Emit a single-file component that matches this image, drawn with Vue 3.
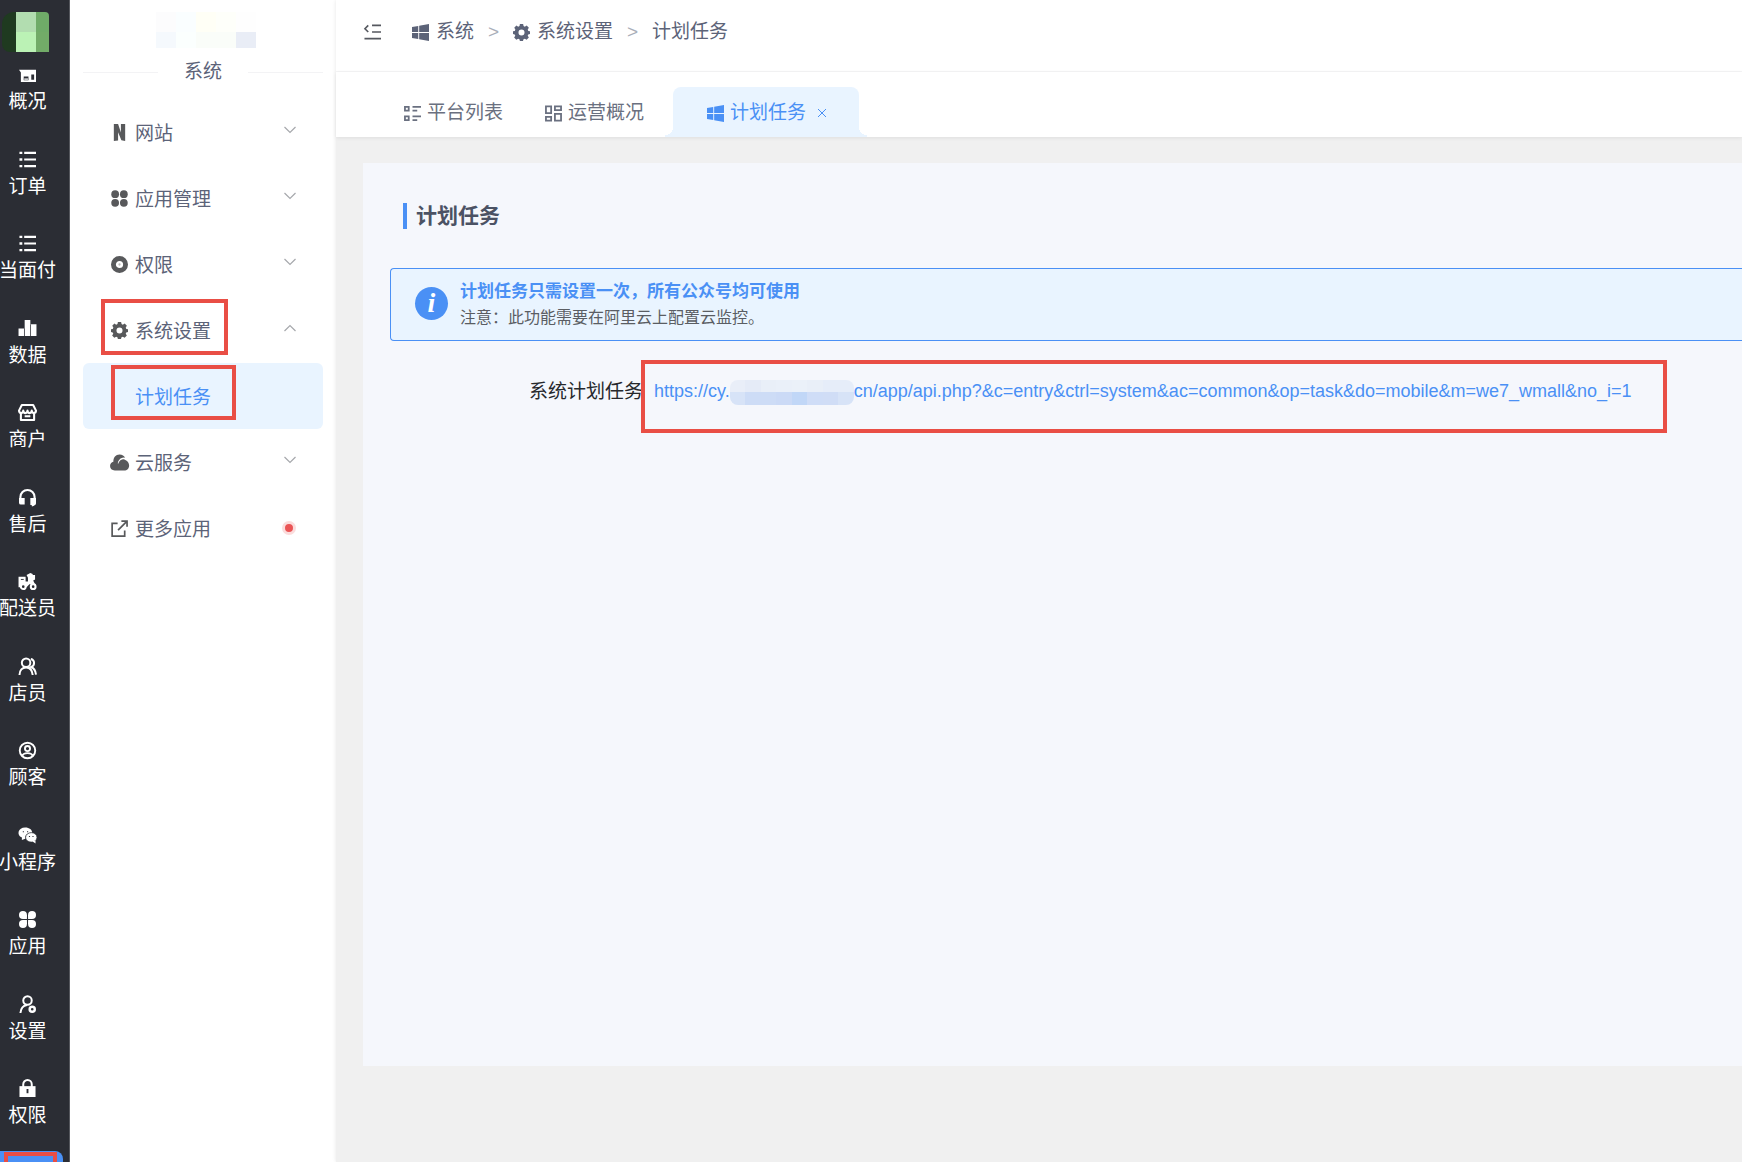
<script setup>
import { ref } from 'vue'

const railItems = [
  { label: '概况', icon: 'overview' },
  { label: '订单', icon: 'list' },
  { label: '当面付', icon: 'list' },
  { label: '数据', icon: 'bars' },
  { label: '商户', icon: 'shop' },
  { label: '售后', icon: 'headset' },
  { label: '配送员', icon: 'scooter' },
  { label: '店员', icon: 'users' },
  { label: '顾客', icon: 'customer' },
  { label: '小程序', icon: 'wechat' },
  { label: '应用', icon: 'apps' },
  { label: '设置', icon: 'userset' },
  { label: '权限', icon: 'lock' }
]

// Inner markup of each glyph, drawn on an 18 x 18 grid.
const icons = {
  overview: '<path d="M0 4h18v13H2V7z" fill="currentColor"/><path d="M5 11h5v4H5zM13 9h3v5.500h-3z" fill="#2b2d34"/><path d="M5.500 13h4v2.500h-4z" fill="#c9cacc"/>',
  list: '<path d="M5.500 2H18M5.500 9H18M5.500 16H18" stroke="currentColor" stroke-width="2.200"/><path d="M.500 2h3M.500 9h3M.500 16h3" stroke="currentColor" stroke-width="2.600"/>',
  bars: '<path d="M-.500 9h6v8h-6zM6 0h6v17H6zM12.500 4.500h6V17h-6z" fill="currentColor"/><path d="M5.800 9v8M12.200 5v12" stroke="#2b2d34" stroke-width=".6"/>',
  shop: '<path d="M3 1h12l3 6c0 3.500-4.500 3.500-4.500 0 0 3.500-4.500 3.500-4.500 0 0 3.500-4.500 3.500-4.500 0C4.500 10.500 0 10.500 0 7zM2 9.500V17h14V9.500M6 13h6" fill="none" stroke="currentColor" stroke-width="2.200" stroke-linejoin="round"/>',
  headset: '<path d="M1.500 12V8.500a7.500 7.500 0 0 1 15 0V14q0 3-3 3.500" fill="none" stroke="currentColor" stroke-width="2.200"/><path d="M0 9.500h6v7H2q-2 0-2-2zM12 9.500h6V15q0 2-2 2h-4z" fill="currentColor"/>',
  scooter: '<path d="M-.500 4H7v5h2.500V5L8 2l4-2 2.500 1v1H17v5l-2 1 2 4h-6l-3 3H-.500z" fill="currentColor"/><circle cx="4.500" cy="14.500" r="2.500" fill="#2b2d34" stroke="currentColor" stroke-width="2.200"/><circle cx="15" cy="14.500" r="2.500" fill="#2b2d34" stroke="currentColor" stroke-width="2.200"/><path d="M2 6.800h3" stroke="#2b2d34"/>',
  users: '<circle cx="7.500" cy="5" r="4.500" fill="none" stroke="currentColor" stroke-width="2.100"/><path d="M.500 18c0-5 3-8 7-8s6.500 3 7 8M12.500 1c4.500 1 4.500 7 .500 8.500 3 1.200 4.500 4 5 8" fill="none" stroke="currentColor" stroke-width="2.100"/>',
  customer: '<circle cx="9" cy="9" r="8.200" fill="none" stroke="currentColor" stroke-width="2"/><circle cx="9" cy="7" r="2.700" fill="none" stroke="currentColor" stroke-width="2"/><path d="M3.500 14.800c1-4 10-4 11 0" fill="none" stroke="currentColor" stroke-width="2"/>',
  wechat: '<path d="M6.500.500c4.500 0 7.500 2.500 7.500 5.700-4-.5-8 2-7.200 6.300l-3.800 1.300.1-2.600C-3 8.500-1 .5 6.500.500z" fill="currentColor"/><ellipse cx="13" cy="11" rx="6" ry="5" fill="currentColor" stroke="#2b2d34" stroke-width=".7"/><path d="m14 15 3.500 2.500V14z" fill="currentColor"/><path d="M4 5h1.200M8.500 5h1.200M10.500 10h1.200M14.200 10h1.200" stroke="#2b2d34" stroke-width="1.200"/>',
  apps: '<circle cx="4.200" cy="4.200" r="4.200" fill="currentColor"/><circle cx="13.800" cy="4.200" r="4.200" fill="currentColor"/><circle cx="4.200" cy="13.800" r="4.200" fill="currentColor"/><circle cx="13.800" cy="13.800" r="4.200" fill="currentColor"/><path d="M4.200 4.200h4.200v4.200H4.200zM9.600 4.200h4.200v4.200H9.600zM4.200 9.600h4.200v4.200H4.200zM9.600 9.600h4.200v4.200H9.600z" fill="currentColor"/>',
  userset: '<circle cx="9" cy="4.700" r="4.500" fill="none" stroke="currentColor" stroke-width="2.100"/><path d="M1.500 18c.5-5 3-8 7-8.500" fill="none" stroke="currentColor" stroke-width="2.100"/><circle cx="14" cy="14" r="2.700" fill="none" stroke="currentColor" stroke-width="2.600"/>',
  lock: '<path d="M.500 6.500h17V18H.500z" fill="currentColor"/><path d="M4.500 8V4.500a4.500 4.500 0 0 1 9 0V8" fill="none" stroke="currentColor" stroke-width="2.100"/><path d="M9 9.500v4.500" stroke="#2b2d34" stroke-width="2"/>',
  site: '<path d="M3 0h4.500l3 9V0H15v18l-4-.8L7.500 8.700V17.500l-4.500.5z" fill="currentColor"/>',
  dots: '<circle cx="4.400" cy="4.400" r="4.100" fill="currentColor"/><circle cx="13.600" cy="4.400" r="4.100" fill="currentColor"/><circle cx="4.400" cy="13.600" r="4.100" fill="currentColor"/><circle cx="13.600" cy="13.600" r="4.100" fill="currentColor"/>',
  ring: '<circle cx="9" cy="9" r="6.400" fill="none" stroke="currentColor" stroke-width="5.200"/><circle cx="9" cy="9" r="1.200" fill="currentColor" opacity=".4"/>',
  gear: '<path fill-rule="evenodd" d="M7.300 0h3.400l.5 2.200 1.300.6 2-1.200 2.300 2.300-1.200 2 .6 1.400 1.800.4v2.900l-1.900.5-.5 1.300 1.200 2-2.400 2.300-1.900-1.200-1.400.6-.5 1.900H7.300l-.5-1.900-1.300-.6-2 1.200-2.300-2.300 1.200-2-.6-1.300L0 10.600V7.700l1.900-.4.600-1.400-1.200-2 2.300-2.300 1.900 1.200 1.400-.6zM9 5.800a3.200 3.200 0 1 0 0 6.400 3.200 3.200 0 0 0 0-6.400z" fill="currentColor"/>',
  cloud: '<path d="M4 17.500c-3 0-5-2-5-4.700C-1 10.500.500 8.800 2.500 8.300 2.500 3.500 5 .500 9 .500c3 0 5 1.500 6 3.700-4.500-.7-7 1.800-7.300 5.300 1.800-3.300 4.300-4.500 7-3.500 2.800 1 4.500 3.200 4.500 6.200 0 3.300-2.200 5.300-5.200 5.300z" fill="currentColor"/><path d="M7.700 10C8 6.500 11 4 15 4.500" fill="none" stroke="#fff" stroke-width=".9"/>',
  external: '<path d="M7 3.500H1.200V17H14.500v-6M11 1.200h6v6M17 1.200 7.500 10.700" fill="none" stroke="currentColor" stroke-width="1.800"/>',
  windows: '<path d="M0 3.200 6.600 2v6.500H0zM7.600 1.900 18 0v8.500H7.600zM0 9.500h6.600V16L0 14.800zM7.600 9.500H18V18L7.600 16.200z" fill="currentColor"/>',
  table: '<path d="M1 2h4v4H1zM1 12h4v4H1z" fill="none" stroke="currentColor" stroke-width="1.900"/><path d="M9 2h9M9 6h5M9 12h9M9 16h5" stroke="currentColor" stroke-width="1.800"/>',
  panels: '<path d="M1 1.500h5.500v7H1zM10.500 1.500H17v4h-6.500zM1 12.500h5.500v4H1zM10.500 9.500H17v7h-6.500z" fill="none" stroke="currentColor" stroke-width="1.900"/>',
  collapse: '<path d="M8.500 1.500H18M8.500 8.500H18M.500 15.500H18" stroke="currentColor" stroke-width="1.700"/><path d="M4.500 1.500 1 5l3.500 3.500" fill="none" stroke="currentColor" stroke-width="1.700"/>'
}

const menu = ref([
  { label: '网站', icon: 'site' },
  { label: '应用管理', icon: 'dots' },
  { label: '权限', icon: 'ring' },
  { label: '系统设置', icon: 'gear', open: true, marked: true, children: ['计划任务'] },
  { label: '云服务', icon: 'cloud' },
  { label: '更多应用', icon: 'external', dot: true }
])

const logoTiles = ['#1f3a20', '#b2ddb0', '#6fab68', '#1f3a20', '#bbf2b5', '#72ab68']
const nameTiles = ['#fcfcfd', '#fafeff', '#fffff6', '#fefffa', '#fefefe', '#f5f9fd', '#fbfffe', '#fafdf9', '#fafdf9', '#e9edf6']
const hostTiles = [
  '#e9eef8', '#e5ebf7', '#e9eff8', '#eaf0f9', '#ebf1f9', '#e9eff8', '#e6edf9', '#e6edf9',
  '#d7e3f7', '#cddcf6', '#cddcf6', '#cbdaf6', '#c1d7f7', '#cfddf7', '#d0ddf6', '#d7e3f7'
]
</script>

<template>
  <div class="app">
    <aside class="rail">
      <div class="logo">
        <i v-for="(c, i) in logoTiles" :key="i" :style="{ background: c }"></i>
      </div>
      <nav class="rail-list">
        <a v-for="item in railItems" :key="item.label" href="#" class="rail-item">
          <svg class="icon" viewBox="0 0 18 18" v-html="icons[item.icon]"></svg>
          <span>{{ item.label }}</span>
        </a>
      </nav>
      <a href="#" class="rail-active" aria-label="系统"><span class="mark"></span></a>
    </aside>

    <aside class="side">
      <div class="site-name">
        <i v-for="(c, i) in nameTiles" :key="i" :style="{ background: c }"></i>
      </div>
      <h2 class="side-title">系统</h2>
      <nav class="menu">
        <template v-for="item in menu" :key="item.label">
          <button type="button" class="menu-item" @click="item.open = !item.open">
            <svg class="icon" viewBox="0 0 18 18" v-html="icons[item.icon]"></svg>
            <span class="menu-label">{{ item.label }}</span>
            <span v-if="item.dot" class="dot"></span>
            <svg v-else class="chevron" :class="{ up: item.open }" viewBox="0 0 12 12">
              <path d="M0.500 3 6 8.500 11.500 3" fill="none" stroke="#a6a8ac" stroke-width="1.200" />
            </svg>
            <span v-if="item.marked" class="mark mark-parent"></span>
          </button>
          <template v-if="item.children && item.open">
            <a v-for="child in item.children" :key="child" href="#" class="submenu">
              {{ child }}
              <span class="mark mark-child"></span>
            </a>
          </template>
        </template>
      </nav>
    </aside>

    <div class="main">
      <header class="topbar">
        <button type="button" class="collapse" aria-label="收起菜单">
          <svg class="icon" viewBox="0 0 18 18" v-html="icons.collapse"></svg>
        </button>
        <nav class="crumbs">
          <a href="#"><svg class="icon" viewBox="0 0 18 18" v-html="icons.windows"></svg>系统</a>
          <span class="sep">&gt;</span>
          <a href="#"><svg class="icon" viewBox="0 0 18 18" v-html="icons.gear"></svg>系统设置</a>
          <span class="sep">&gt;</span>
          <a href="#">计划任务</a>
        </nav>
      </header>

      <div class="tabs">
        <button type="button" class="tab">
          <svg class="icon" viewBox="0 0 18 18" v-html="icons.table"></svg>平台列表
        </button>
        <button type="button" class="tab">
          <svg class="icon" viewBox="0 0 18 18" v-html="icons.panels"></svg>运营概况
        </button>
        <button type="button" class="tab active">
          <svg class="icon" viewBox="0 0 18 18" v-html="icons.windows"></svg>计划任务
          <svg class="close" viewBox="0 0 10 10"><path d="M1 1 9 9M9 1 1 9" stroke="currentColor" /></svg>
        </button>
      </div>

      <main class="content">
        <section class="panel">
          <h1>计划任务</h1>
          <div class="alert">
            <span class="info">i</span>
            <div>
              <strong>计划任务只需设置一次，所有公众号均可使用</strong>
              <p>注意：此功能需要在阿里云上配置云监控。</p>
            </div>
          </div>
          <div class="row">
            <span class="row-label">系统计划任务</span>
            <div class="link-box">
              <a href="#">https://cy.<span class="host"><i v-for="(c, i) in hostTiles" :key="i" :style="{ background: c }"></i></span>cn/app/api.php?&amp;c=entry&amp;ctrl=system&amp;ac=common&amp;op=task&amp;do=mobile&amp;m=we7_wmall&amp;no_i=1</a>
            </div>
          </div>
        </section>
      </main>
    </div>
  </div>
</template>

<style>
body {
  margin: 0;
  overflow: hidden;
}
</style>

<style scoped>
.app {
  display: flex;
  height: 100vh;
  font: 19px/26px "Liberation Sans", "Noto Sans CJK SC", sans-serif;
  color: #5c6378;
  overflow: hidden;
}
* {
  box-sizing: border-box;
}
a {
  color: inherit;
  text-decoration: none;
}
button {
  border: 0;
  background: none;
  padding: 0;
  font: inherit;
  color: inherit;
}
.icon {
  width: 17px;
  height: 17px;
  flex: none;
  overflow: visible;
}
.mark {
  position: absolute;
  border: 4px solid #e94e45;
}

/* dark rail */
.rail {
  flex: none;
  width: 70px;
  display: flex;
  flex-direction: column;
  background: #2b2d34;
  border-right: 1px solid #55575d;
  color: #fff;
}
.logo {
  flex: none;
  display: grid;
  grid-template: 20px 20px / 14px 20px 13px;
  width: 47px;
  margin: 12px 0 14px 2px;
  border-radius: 12px 4px 0 8px;
  overflow: hidden;
}
.rail-list {
  flex: 1;
  width: 55px;
  display: flex;
  flex-direction: column;
  justify-content: space-between;
}
.rail-item {
  height: 48px;
  display: flex;
  flex-direction: column;
  align-items: center;
  gap: 6px;
  white-space: nowrap;
}
.rail-active {
  position: relative;
  flex: none;
  width: 63px;
  height: 11px;
  margin-top: 23px;
  background: #4a90f5;
  border-top-right-radius: 8px;
  overflow: hidden;
}
.rail-active .mark {
  left: 4px;
  top: 1px;
  width: 53px;
  height: 60px;
}

/* menu column */
.side {
  flex: none;
  width: 266px;
  padding: 0 13px;
  background: #fff;
}
.site-name {
  display: grid;
  grid-template: 20px 16px / repeat(5, 20px);
  justify-content: center;
  padding: 12px 0 0 5px;
}
.side-title {
  display: flex;
  align-items: center;
  justify-content: center;
  gap: 26px;
  margin: 11px 0 14px;
  font-size: 19px;
  font-weight: 400;
}
.side-title::before,
.side-title::after {
  content: "";
  flex: 1;
  height: 1px;
  background: #f3f3f5;
}
.menu-item {
  position: relative;
  width: 100%;
  height: 66px;
  display: flex;
  align-items: center;
  padding: 0 27px 0 28px;
}
.menu-item .icon {
  color: #58595b;
}
.menu-label {
  padding-top: 4px;
  margin-left: 7px;
  margin-right: auto;
}
.chevron {
  width: 12px;
  height: 12px;
  margin-bottom: 4px;
}
.chevron.up {
  transform: rotate(180deg);
}
.dot {
  width: 14px;
  height: 14px;
  border: 3px solid #fbdcdc;
  border-radius: 50%;
  background: #ea5455;
}
.submenu {
  position: relative;
  display: flex;
  align-items: center;
  height: 66px;
  padding: 4px 0 0 52px;
  border-radius: 6px;
  background: #e9f4ff;
  color: #4a90f5;
}
.mark-parent {
  left: 18px;
  top: 2px;
  width: 127px;
  height: 56px;
}
.mark-child {
  left: 28px;
  top: 2px;
  width: 125px;
  height: 55px;
}

/* right side */
.main {
  flex: 1;
  min-width: 0;
  display: flex;
  flex-direction: column;
  background: #f0f0f0;
  box-shadow: 0 0 4px rgba(0, 0, 0, 0.1);
}
.topbar {
  flex: none;
  height: 72px;
  display: flex;
  align-items: center;
  padding: 0 28px 7px;
  background: #fff;
  border-bottom: 1px solid #f5f5f6;
}
.collapse {
  display: flex;
  margin-right: 31px;
  color: #55585f;
}
.crumbs,
.crumbs a {
  display: flex;
  align-items: center;
  gap: 7px;
}
.crumbs {
  gap: 13px;
}
.sep {
  width: 13px;
  text-align: center;
  color: #a9aeb9;
}
.tabs {
  flex: none;
  height: 65px;
  display: flex;
  align-items: flex-end;
  padding-left: 68px;
  background: #fff;
  box-shadow: 0 1px 4px rgba(0, 0, 0, 0.08);
}
.tab {
  position: relative;
  height: 50px;
  display: flex;
  align-items: center;
  gap: 6px;
  padding-top: 2px;
  margin-right: 42px;
  color: #6a7080;
}
.tab.active {
  margin-left: -13px;
  padding: 2px 32px 0 34px;
  border-radius: 8px 8px 0 0;
  background: #e9f4ff;
  color: #4a90f5;
}
.tab.active::before,
.tab.active::after {
  content: "";
  position: absolute;
  bottom: 0;
  width: 8px;
  height: 8px;
}
.tab.active::before {
  right: 100%;
  background: radial-gradient(circle at 0 -2px, transparent 8px, #e9f4ff 8px);
}
.tab.active::after {
  left: 100%;
  background: radial-gradient(circle at 100% -2px, transparent 8px, #e9f4ff 8px);
}
.close {
  width: 10px;
  height: 10px;
  margin-left: 5px;
}
.content {
  flex: 1;
  display: flex;
  padding: 26px 0 96px 27px;
}
.panel {
  flex: 1;
  min-width: 0;
  padding: 40px 0 0 27px;
  background: #f5f7fc;
}
h1 {
  margin: 0 0 39px 13px;
  padding-left: 9px;
  border-left: 4px solid #4a90f5;
  font-size: 21px;
  line-height: 26px;
  font-weight: 700;
  color: #4b5264;
}
.alert {
  display: flex;
  align-items: center;
  gap: 12px;
  height: 73px;
  padding: 0 24px;
  border: 1px solid #4a90f5;
  border-right: 0;
  border-radius: 4px 0 0 4px;
  background: #e9f4ff;
}
.info {
  flex: none;
  width: 33px;
  height: 33px;
  margin-bottom: 3px;
  border-radius: 50%;
  background: #4a90f5;
  color: #fff;
  font: italic bold 28px/31px "Liberation Serif", serif;
  text-align: center;
}
.alert strong {
  display: block;
  font-size: 17px;
  color: #4a90f5;
}
.alert p {
  margin: 0;
  font-size: 16px;
  color: #5a5d63;
}
.row {
  display: flex;
  margin-top: 19px;
  padding-left: 139px;
}
.row-label {
  width: 112px;
  padding-top: 19px;
  color: #26282c;
  white-space: nowrap;
}
.link-box {
  z-index: 1;
  min-width: 1026px;
  height: 73px;
  padding: 14px 12px 0 9px;
  border: 4px solid #e94e45;
  color: #4a90f5;
  font-size: 18px;
  white-space: nowrap;
}
.host {
  display: inline-grid;
  grid-template: 12px 13px / repeat(8, 1fr);
  width: 124px;
  border-radius: 8px;
  overflow: hidden;
  vertical-align: middle;
}
</style>
